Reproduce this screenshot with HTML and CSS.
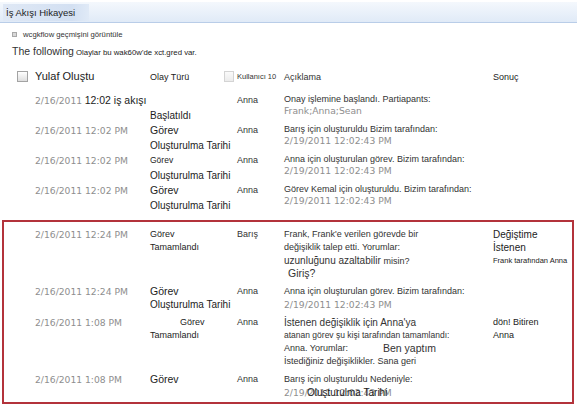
FILE: index.html
```html
<!DOCTYPE html>
<html lang="tr">
<head>
    <meta charset="UTF-8">
    <title>İş Akışı Hikayesi</title>
    <link rel="stylesheet" href="styles.css">
</head>
<body>
    <div class="titlebar">
        <span class="title">İş Akışı Hikayesi</span>
    </div>

    <div class="viewlink">
        <span class="bullet"></span>
        <span>wcgkflow geçmişini görüntüle</span>
    </div>

    <div class="intro">
        <span class="lead">The following</span> Olaylar bu wak60w'de xct.gred var.
    </div>

    <div class="history">
        <!-- column headers -->
        <div class="row head">
            <div class="pick"><span class="check"></span></div>
            <div class="date"><span class="t11">Yulaf Oluştu</span></div>
            <div class="type head-type">
                <span class="t9">Olay Türü</span>
                <span class="check small"></span>
            </div>
            <div class="user"><span class="t7">Kullanıcı 10</span></div>
            <div class="desc"><span class="t9">Açıklama</span></div>
            <div class="result"><span class="t9">Sonuç</span></div>
        </div>

        <div class="row">
            <div class="date"><span class="when">2/16/2011</span> <span class="t105">12:02 iş akışı</span></div>
            <div class="type">
                <div class="ln"></div>
                <div class="ln t10">Başlatıldı</div>
            </div>
            <div class="user">Anna</div>
            <div class="desc">
                <div class="ln">Onay işlemine başlandı. Partiapants:</div>
                <div class="ln when">Frank;Anna;Sean</div>
            </div>
        </div>

        <div class="row">
            <div class="date when">2/16/2011 12:02 PM</div>
            <div class="type">
                <div class="ln t105">Görev</div>
                <div class="ln t10">Oluşturulma Tarihi</div>
            </div>
            <div class="user">Anna</div>
            <div class="desc">
                <div class="ln">Barış için oluşturuldu Bizim tarafından:</div>
                <div class="ln when">2/19/2011 12:02:43 PM</div>
            </div>
        </div>

        <div class="row">
            <div class="date when">2/16/2011 12:02 PM</div>
            <div class="type">
                <div class="ln t8">Görev</div>
                <div class="ln t10">Oluşturulma Tarihi</div>
            </div>
            <div class="user">Anna</div>
            <div class="desc">
                <div class="ln">Anna için oluşturulan görev. Bizim tarafından:</div>
                <div class="ln when">2/19/2011 12:02:43 PM</div>
            </div>
        </div>

        <div class="row">
            <div class="date when">2/16/2011 12:02 PM</div>
            <div class="type">
                <div class="ln t105">Görev</div>
                <div class="ln t10">Oluşturulma Tarihi</div>
            </div>
            <div class="user">Anna</div>
            <div class="desc">
                <div class="ln">Görev Kemal için oluşturuldu. Bizim tarafından:</div>
                <div class="ln when">2/19/2011 12:02:43 PM</div>
            </div>
        </div>

        <!-- change request events -->
        <div class="flagged">
            <div class="row">
                <div class="date when">2/16/2011 12:24 PM</div>
                <div class="type">
                    <div class="ln">Görev</div>
                    <div class="ln">Tamamlandı</div>
                </div>
                <div class="user">Barış</div>
                <div class="desc">
                    <div class="ln">Frank, Frank'e verilen görevde bir</div>
                    <div class="ln">değişiklik talep etti. Yorumlar:</div>
                    <div class="ln t10">uzunluğunu azaltabilir <span class="t9">misin?</span></div>
                    <div class="ln t105 nudge">Giriş?</div>
                </div>
                <div class="result">
                    <div class="ln t10">Değiştime</div>
                    <div class="ln t10">İstenen</div>
                    <div class="ln t7">Frank tarafından Anna</div>
                </div>
            </div>

            <div class="row">
                <div class="date when">2/16/2011 12:24 PM</div>
                <div class="type">
                    <div class="ln t105">Görev</div>
                    <div class="ln t10">Oluşturulma Tarihi</div>
                </div>
                <div class="user">Anna</div>
                <div class="desc">
                    <div class="ln">Anna için oluşturulan görev. Bizim tarafından:</div>
                    <div class="ln when">2/19/2011 12:02:43 PM</div>
                </div>
            </div>

            <div class="row">
                <div class="date when">2/16/2011 1:08 PM</div>
                <div class="type">
                    <div class="ln indent">Görev</div>
                    <div class="ln">Tamamlandı</div>
                </div>
                <div class="user">Anna</div>
                <div class="desc">
                    <div class="ln t10">İstenen değişiklik için Anna'ya</div>
                    <div class="ln t8">atanan görev şu kişi tarafından tamamlandı:</div>
                    <div class="ln split"><span class="split-first">Anna. Yorumlar:</span><span class="t105">Ben yaptım</span></div>
                    <div class="ln">İstediğiniz değişiklikler. Sana geri</div>
                </div>
                <div class="result">
                    <div class="ln">dön! Bitiren</div>
                    <div class="ln">Anna</div>
                </div>
            </div>

            <div class="row">
                <div class="date when">2/16/2011 1:08 PM</div>
                <div class="type">
                    <div class="ln t105">Görev</div>
                </div>
                <div class="user">Anna</div>
                <div class="desc">
                    <div class="ln">Barış için oluşturuldu Nedeniyle:</div>
                    <div class="ln when">2/19/2011 12:02:43 PM</div>
                    <span class="overprint">Oluşturulma Tarihi</span>
                </div>
            </div>
        </div>
    </div>
</body>
</html>
```

FILE: styles.css
```css
* {
    margin: 0;
    padding: 0;
    box-sizing: border-box;
}

body {
    width: 577px;
    font-family: 'Liberation Sans', Arial, sans-serif;
    color: #1c1c1c;
    background: #fff;
}

/* web part title */
.titlebar {
    margin-top: 2px;
    height: 21px;
    padding-left: 3px;
    display: flex;
    align-items: center;
    background: linear-gradient(#f4f8fd, #e0eaf7);
    border-bottom: 1px solid #b9cde8;
}

.title {
    padding: 3px 14px 3px 3px;
    font-size: 9.5px;
    color: #222;
    background: linear-gradient(90deg, #dfe8f5, #d3e0f2 80%, #e0eaf7);
}

.viewlink {
    margin: 5px 0 0 12px;
    height: 12px;
    display: flex;
    align-items: center;
    gap: 6px;
    font-size: 7.7px;
    color: #333;
}

.bullet {
    width: 5px;
    height: 5px;
    border: 1px solid #a8a8a8;
    background: #d8d8d8;
}

.intro {
    margin: 3px 0 0 12px;
    height: 16px;
    line-height: 16px;
    font-size: 7.8px;
    color: #222;
}

.intro .lead {
    font-size: 10.5px;
    color: #333;
}

/* history table */
.history {
    margin-top: 8px;
}

.row {
    display: grid;
    grid-template-columns: 35px 115px 87px 47px 209px 1fr;
    font-size: 9px;
    line-height: 15px;
    height: 30px;
}

.row .ln {
    height: 15px;
    white-space: nowrap;
}

.pick { grid-column: 1; }
.date { grid-column: 2; white-space: nowrap; }
.type { grid-column: 3; }
.user { grid-column: 4; color: #333; }
.desc { grid-column: 5; color: #333; line-height: 12px; position: relative; }
.result { grid-column: 6; color: #222; }

.row .desc .ln {
    height: 12px;
}

.row.head {
    height: 18px;
    margin-bottom: 8px;
    align-items: center;
    line-height: 18px;
}

.head .pick {
    padding-left: 17px;
    display: flex;
}

.head-type {
    display: flex;
    align-items: center;
    justify-content: space-between;
    padding-right: 3px;
}

.check {
    display: block;
    width: 11px;
    height: 11px;
    border: 1px solid #a3a3a3;
    background: linear-gradient(#ffffff, #dedede);
}

.check.small {
    width: 10px;
    height: 11px;
    border-color: #d4d4d4;
    background: linear-gradient(#fafafa, #ececec);
}

/* timestamps and participant lists use a wider face */
.when {
    font-family: 'DejaVu Sans', Verdana, sans-serif;
    font-size: 9.2px;
    color: #8e8e8e;
}

.t7 { font-size: 7.5px; }
.t8 { font-size: 8.5px; }
.t9 { font-size: 9px; }
.t10 { font-size: 10px; }
.t105 { font-size: 10.5px; }
.t11 { font-size: 11px; }

.indent {
    padding-left: 30px;
}

.nudge {
    padding-left: 4px;
}

.split {
    display: flex;
}

.split-first {
    flex: 0 0 99px;
}

.overprint {
    position: absolute;
    left: 23px;
    top: 12px;
    font-size: 10px;
    line-height: 14px;
    color: #1c1c1c;
}

/* outlined group of change events */
.flagged {
    margin: 7px 3px 0 2px;
    padding: 6px 0 3px;
    border: 2px solid #b3333b;
    display: flex;
    flex-direction: column;
    gap: 5px;
}

.flagged .row {
    grid-template-columns: 31px 115px 87px 47px 209px 1fr;
    line-height: 13px;
    height: auto;
}

.flagged .row .ln,
.flagged .row .desc .ln {
    height: 13px;
}

.flagged .desc {
    line-height: 13px;
}

.flagged .overprint {
    top: 13px;
}
```
